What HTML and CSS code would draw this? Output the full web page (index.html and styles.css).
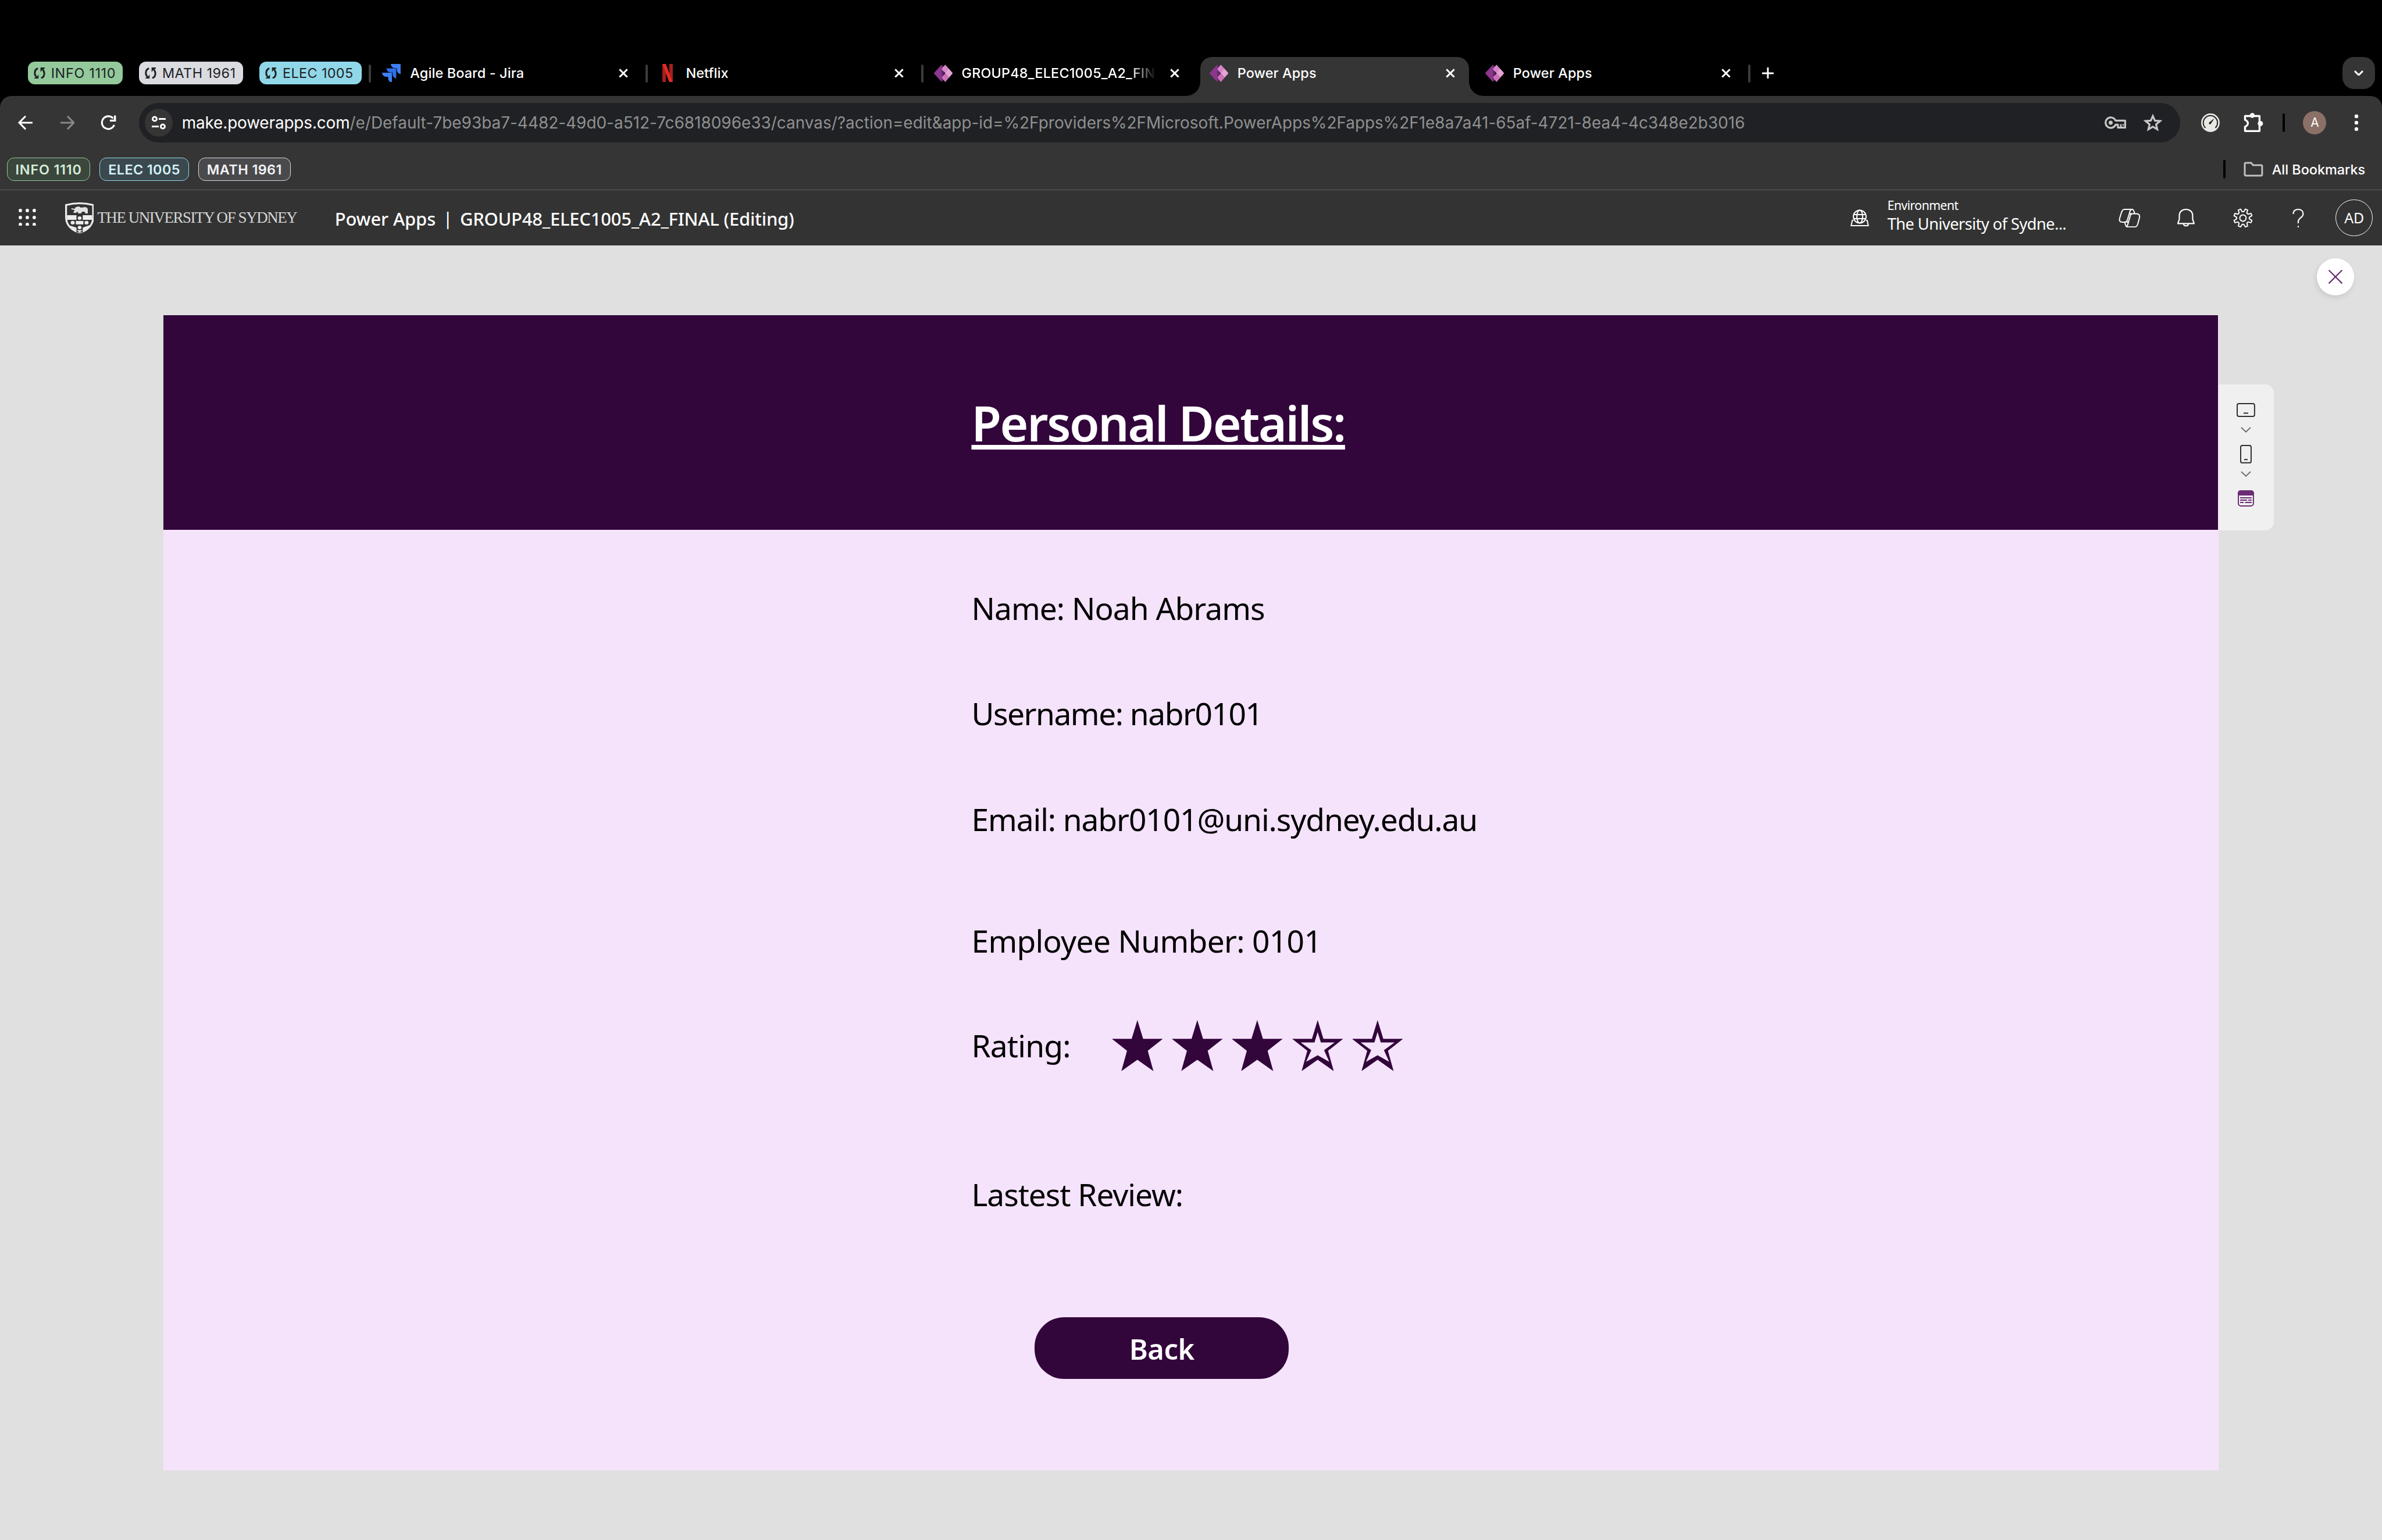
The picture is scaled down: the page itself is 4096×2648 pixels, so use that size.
FILE: index.html
```html
<!DOCTYPE html>
<html lang="en">
<head>
<meta charset="utf-8">
<title>Power Apps</title>
<link rel="stylesheet" href="styles.css">
</head>
<body>
<svg class="defs" width="0" height="0" aria-hidden="true">
  <symbol id="close" viewBox="0 0 16 16"><path d="M1.3 1.3 14.7 14.7M14.7 1.3 1.3 14.7" fill="none" stroke="currentColor" stroke-width="3"/></symbol>
  <symbol id="sync" viewBox="0 0 20 20"><path d="M7.2 1.5C3.6 2.8 1.8 6 1.8 9.8c0 3 1 5 3.2 6.6" fill="none" stroke="currentColor" stroke-width="3"/><path d="M8.3 12v8H1v-2.300L5 16.500z" fill="currentColor"/><path d="M12.8 18.500c3.600-1.300 5.400-4.500 5.400-8.300 0-3-1-5-3.200-6.600" fill="none" stroke="currentColor" stroke-width="3"/><path d="M11.700 8V0H19v2.300L15 3.500z" fill="currentColor"/></symbol>
  <symbol id="papps" viewBox="0 0 32 32"><path d="M13 1.500 16 4.500V27.500L13 30.500 .8 17.400a2 2 0 0 1 0-2.800z" fill="#8b378e"/><path d="M13 1.500 16.500 5 13 9.500 18 16 13 22 16.500 27 13 30.500z" fill="#6b2475"/><path d="M19.500 1.200 31.300 14.600a2 2 0 0 1 0 2.800L19.500 30.800 14.500 25a2 2 0 0 1 0-2.600L19.500 16 14 10a2 2 0 0 1 0-2.700z" fill="#d586c4"/><path d="M25.300 8 31.300 14.600a2 2 0 0 1 0 2.800L26 23.200 20 16z" fill="#e3a3d3"/><path d="M20 16 26 23.200 19.500 30.800 14.500 25a2 2 0 0 1 0-2.600z" fill="#cb72b6"/></symbol>
  <symbol id="star" viewBox="0 0 88 88"><path d="M44 0 53.900 32.400H88L61.900 53 71.700 88 44 68.500 16.300 88 26.100 53 0 32.400H34.100Z" fill="currentColor"/></symbol>
  <symbol id="star-empty" viewBox="0 0 88 88"><path fill-rule="evenodd" d="M44 0 53.900 32.400H88L61.900 53 71.700 88 44 68.500 16.300 88 26.100 53 0 32.400H34.100ZM44 20.700 38.500 38.600H14.700L33 52 24 72 44 60.800 64 72 55 52 73.300 38.600H49.500Z" fill="currentColor"/></symbol>
</svg>
<div class="screen">
  <header class="tabstrip">
    <div class="group green"><svg class="i20"><use href="#sync"/></svg><span>INFO 1110</span></div>
    <div class="group grey"><svg class="i20"><use href="#sync"/></svg><span>MATH 1961</span></div>
    <div class="group blue"><svg class="i20"><use href="#sync"/></svg><span>ELEC 1005</span></div>
    <div class="tab first">
      <svg class="fav" viewBox="0 0 32 32"><path d="M15 0H32V17.500C28 16.500 25.500 14 25.500 9.500V7H22C18 7 15.500 4 15 0Z" fill="#3d80f5"/><path d="M7.500 7.500H24.500V25C20.500 24 18 21 18 17V14.500H14.500C10.500 14.500 8 11.500 7.500 7.500Z" fill="#2e6fe8"/><path d="M0 15H17V32C13 31 10.500 28.500 10.500 24.500V22H7C3 22 .5 19 0 15Z" fill="#3d80f5"/></svg>
      <span class="title">Agile Board - Jira</span><svg class="x"><use href="#close"/></svg>
    </div>
    <div class="tab">
      <svg class="fav" viewBox="0 0 32 32"><path d="M7 0h6v32H7zM19 0h6v32h-6z" fill="#a61e1e"/><path d="M7 0h6l12 32h-6z" fill="#dd2c26"/></svg>
      <span class="title">Netflix</span><svg class="x"><use href="#close"/></svg>
    </div>
    <div class="tab bare">
      <svg class="fav"><use href="#papps"/></svg>
      <span class="title long">GROUP48_ELEC1005_A2_FINAL</span><svg class="x"><use href="#close"/></svg>
    </div>
    <div class="tab active">
      <svg class="fav"><use href="#papps"/></svg>
      <span class="title">Power Apps</span><svg class="x"><use href="#close"/></svg>
    </div>
    <div class="tab">
      <svg class="fav"><use href="#papps"/></svg>
      <span class="title">Power Apps</span><svg class="x"><use href="#close"/></svg>
    </div>
    <svg class="plus" viewBox="0 0 20 20"><path d="M10 0V20M0 10H20" stroke="#fff" stroke-width="3"/></svg>
    <div class="search"><svg width="16" height="10" viewBox="0 0 16 10"><path d="M1 1.200 8 8 15 1.200" fill="none" stroke="#fff" stroke-width="3"/></svg></div>
  </header>

  <div class="toolbar">
    <svg class="back" width="26" height="26" viewBox="0 0 26 26"><path d="M13 1.800 2 13 13 24.200M2 13H25" fill="none" stroke="#fff" stroke-width="3"/></svg>
    <svg class="fwd" width="26" height="26" viewBox="0 0 26 26"><path d="M13 1.800 24 13 13 24.200M24 13H1" fill="none" stroke="#8a8a8a" stroke-width="3"/></svg>
    <svg class="reload" width="28" height="28" viewBox="0 0 28 28"><path d="M23.500 18A11 11 0 1 1 21.500 6.500" fill="none" stroke="#fff" stroke-width="3.200"/><path d="M23 1.500h3.500V12H16V8.700h7z" fill="#fff"/></svg>
    <div class="omnibox">
      <div class="site"><svg width="26" height="24" viewBox="0 0 26 24" fill="none" stroke="#fff" stroke-width="3"><circle cx="6" cy="5.500" r="3.500"/><path d="M13 5.500H25M1 18.500H13"/><circle cx="20" cy="18.500" r="3.500"/></svg></div>
      <span class="url"><b>make.powerapps.com</b><span>/e/Default-7be93ba7-4482-49d0-a512-7c6818096e33/canvas/?action=edit&amp;app-id=%2Fproviders%2FMicrosoft.PowerApps%2Fapps%2F1e8a7a41-65af-4721-8ea4-4c348e2b3016</span></span>
      <svg class="key" width="38" height="22" viewBox="0 0 38 22"><path d="M19 7.500A9 9 0 1 0 19 14.500H23V19.500H35.500V7.500Z" fill="none" stroke="#c7c7c7" stroke-width="3.200" stroke-linejoin="round"/><circle cx="10.500" cy="11" r="3.500" fill="#c7c7c7"/><path d="M28 13.500V19M32 13.500V16" stroke="#c7c7c7" stroke-width="2.500"/></svg>
      <svg class="fave" width="34" height="32" viewBox="0 0 34 32"><path d="M17 4.500 20.500 12.500 29.500 13.200 22.600 19 24.700 27.500 17 23 9.300 27.500 11.400 19 4.500 13.200 13.500 12.500Z" fill="none" stroke="#c7c7c7" stroke-width="3.200"/></svg>
    </div>
    <svg class="gauge" width="32" height="32" viewBox="0 0 32 32"><circle cx="16" cy="16" r="16" fill="#e6e8e4"/><path d="M7.500 25A12.300 12.300 0 1 1 24.500 25" fill="none" stroke="#222" stroke-width="2"/><path d="M21.500 10 13.500 16.500 15.500 19Z" fill="#222" stroke="#222"/></svg>
    <svg class="puzzle" width="36" height="36" viewBox="0 0 36 36"><path d="M3.500 6.500H28.500V32.500H3.500V25C10 22 10 16 3.500 13Z" fill="none" stroke="#fff" stroke-width="3.400" stroke-linejoin="round"/><circle cx="16" cy="5.500" r="4.300" fill="#fff"/><circle cx="30" cy="19.500" r="4.500" fill="#fff"/></svg>
    <i class="bar"></i>
    <span class="avatar">A</span>
    <svg class="dots" width="8" height="30" viewBox="0 0 8 30" fill="#fff"><circle cx="4" cy="4" r="3.200"/><circle cx="4" cy="15" r="3.200"/><circle cx="4" cy="26" r="3.200"/></svg>
  </div>

  <div class="bookmarks">
    <span class="bm g">INFO 1110</span>
    <span class="bm b">ELEC 1005</span>
    <span class="bm w">MATH 1961</span>
    <i class="bar"></i>
    <svg class="folder" width="34" height="26" viewBox="0 0 34 26"><path d="M2 4a2 2 0 0 1 2-2H13l3.500 4H30a2 2 0 0 1 2 2V22a2 2 0 0 1-2 2H4a2 2 0 0 1-2-2Z" fill="none" stroke="#c0c0c0" stroke-width="3"/></svg>
    <span>All Bookmarks</span>
  </div>

  <div class="suite">
    <svg class="waffle" width="30" height="30" viewBox="0 0 30 30" fill="#fff"><circle cx="3" cy="3" r="2.900"/><circle cx="15" cy="3" r="2.900"/><circle cx="27" cy="3" r="2.900"/><circle cx="3" cy="15" r="2.900"/><circle cx="15" cy="15" r="2.900"/><circle cx="27" cy="15" r="2.900"/><circle cx="3" cy="27" r="2.900"/><circle cx="15" cy="27" r="2.900"/><circle cx="27" cy="27" r="2.900"/></svg>
    <svg class="shield" width="50" height="54" viewBox="0 0 46 54" preserveAspectRatio="none"><path d="M1.500 4.500Q23-1.500 44.500 4.500V26C44.500 40 34 49 23 52.500 12 49 1.500 40 1.500 26Z" fill="#333" stroke="#ececec" stroke-width="3"/><path d="M10 10l5 1 2-3 5-1 3 2 8-1 3 3v8h-4l-1-3-4 0-2 3h-4l-1-3-3 2h-4l2-5-5-1z" fill="#e2e2e2"/><path d="M3 22H43V30H3ZM7 40 19 44 23 51 27 44 40 39C36 45 29 50 23 52 16 49 10 45 7 40Z" fill="#ececec"/><path d="M18 22h10v30h-10z" fill="#333"/><circle cx="23" cy="27" r="3" fill="#ececec"/><circle cx="12" cy="35" r="3.200" fill="#ececec"/><circle cx="34" cy="35" r="3.200" fill="#ececec"/><path d="M17 32h12v6H17z" fill="#ececec"/><circle cx="23" cy="43.500" r="3" fill="#ececec"/><path d="M18 48h10l-5 4z" fill="#ececec"/></svg>
    <span class="uni">THE UNIVERSITY OF SYDNEY</span>
    <span class="app">Power Apps</span><span class="pipe">|</span><span class="app file">GROUP48_ELEC1005_A2_FINAL (Editing)</span>
    <svg class="envicon" width="32" height="30" viewBox="0 0 32 30" fill="none" stroke="#fff" stroke-width="2"><circle cx="16" cy="12.500" r="11"/><ellipse cx="16" cy="12.500" rx="5" ry="11"/><path d="M5.500 9H26.500M5.500 16H26.500M5 19H3.200L1.200 28H30.800L28.800 19H27"/></svg>
    <div class="env"><span class="small">Environment</span><span class="big">The University of Sydne...</span></div>
    <svg class="copilot" width="38" height="34" viewBox="0 0 38 34" fill="none" stroke="#fff" stroke-width="2" stroke-linejoin="round"><path d="M10 2H23.500C26.500 2 26.500 6 28 9.500H31C35.500 9.500 37 12.500 36 16.500L33.500 26C32.300 30.500 31 32.500 27 32.500H16C12 32.500 12 28 10.500 24H6C2 24 .8 21.500 2 17L4.800 8C6 4 7 2 10 2Z"/><path d="M23 2C21 2.500 20 4 19.300 7L15 21C14 24 12.500 24 10.500 24M28 9.500H24C21.500 9.500 20.800 11 20 14L16.500 26C15.500 30 14.500 32 12.500 31M19 9.500H24M14 24H18"/></svg>
    <svg class="bell" width="32" height="34" viewBox="0 0 32 34" fill="none" stroke="#fff" stroke-width="2.200" stroke-linejoin="round"><path d="M4.500 19V13C4.500 6 9.500 2 16 2S27.500 6 27.500 13V19L30 26.500H2Z"/><path d="M12 27C12 31.500 20 31.500 20 27"/></svg>
    <svg class="gear" width="34" height="34" viewBox="0 0 34 34" fill="none" stroke="#fff" stroke-width="2" stroke-linejoin="round"><path d="M12.900 1.600 15.600 6.100H18.400L21.100 1.600 25 3.200 23.700 8.300 25.700 10.300 30.800 9 32.400 12.900 27.900 15.600V18.400L32.400 21.100 30.800 25 25.700 23.700 23.700 25.700 25 30.800 21.100 32.400 18.400 27.900H15.600L12.900 32.400 9 30.800 10.300 25.700 8.300 23.700 3.200 25 1.600 21.100 6.100 18.400V15.600L1.600 12.900 3.200 9 8.300 10.300 10.300 8.300 9 3.200Z"/><circle cx="17" cy="17" r="5.500"/></svg>
    <svg class="help" width="20" height="34" viewBox="0 0 20 34" fill="none" stroke="#fff" stroke-width="2.200"><path d="M1.500 10C1.500 4.500 5 2 10 2S18.500 5 18.500 10C18.500 16 10 17 10 23V26"/><path d="M10 30.500V33"/></svg>
    <span class="me">AD</span>
  </div>

  <main class="stage">
    <section class="canvas">
      <div class="banner"><h1>Personal Details:</h1></div>
      <div class="form">
        <p class="name">Name: Noah Abrams</p>
        <p class="user">Username: nabr0101</p>
        <p class="mail">Email: nabr0101@uni.sydney.edu.au</p>
        <p class="emp">Employee Number: 0101</p>
        <p class="rate"><span class="lbl">Rating:</span><span class="stars"><svg><use href="#star"/></svg><svg><use href="#star"/></svg><svg><use href="#star"/></svg><svg><use href="#star-empty"/></svg><svg><use href="#star-empty"/></svg></span></p>
        <p class="rev">Lastest Review:</p>
        <button class="backbtn">Back</button>
      </div>
    </section>
    <aside class="rail">
      <svg class="tablet" width="34" height="26" viewBox="0 0 34 26" fill="none" stroke="#2f2f2f" stroke-width="2"><rect x="2" y="2" width="30" height="22" rx="3"/><path d="M13 18.500H21"/></svg>
      <svg class="chev" width="18" height="10" viewBox="0 0 18 10"><path d="M1 1 9 8.700 17 1" fill="none" stroke="#6a6a6a" stroke-width="1.800"/></svg>
      <svg class="phone" width="22" height="34" viewBox="0 0 22 34" fill="none" stroke="#2f2f2f" stroke-width="2"><rect x="2" y="2" width="18" height="30" rx="3"/><path d="M8 26.300H14"/></svg>
      <svg class="chev two" width="18" height="10" viewBox="0 0 18 10"><path d="M1 1 9 8.700 17 1" fill="none" stroke="#6a6a6a" stroke-width="1.800"/></svg>
      <svg class="resp" width="30" height="30" viewBox="0 0 30 30" fill="none" stroke="#6b2c73" stroke-width="2"><rect x="2" y="2" width="26" height="26" rx="4.500"/><path d="M2 9V6A4 4 0 0 1 6 2H24A4 4 0 0 1 28 6V9Z" fill="#6b2c73"/><path d="M5 14H25M5 18H17M19 18H25M5 22H11M13.500 22H25"/></svg>
    </aside>
    <button class="exit"><svg width="26" height="26" viewBox="0 0 26 26"><path d="M1.500 1.500 24.500 24.500M24.500 1.500 1.500 24.500" stroke="#6b2c73" stroke-width="2.200"/></svg></button>
  </main>
</div>
</body>
</html>
```
FILE: styles.css
```css
* { box-sizing: border-box; }
html { background: #e0e0e0; }
body { margin: 0; overflow: hidden; font-family: Inter, "Liberation Sans", sans-serif; }
svg { display: block; flex: none; }
.defs { position: absolute; }
.screen { width: 4112px; height: 2659px; zoom: 0.99611; display: flex; flex-direction: column; background: #000; }

/* tab strip */
.tabstrip { height: 166px; flex: none; padding: 86px 12px 0 48px; display: flex; align-items: center; background: #000; color: #fff; font-size: 23.5px; white-space: nowrap; }
.group { height: 40px; border-radius: 12px; padding-left: 10px; display: flex; align-items: center; gap: 10px; color: #202124; margin-right: 28px; }
.group.green { width: 164px; background: #93c99b; letter-spacing: 0.68px; }
.group.grey { width: 180px; background: #dadbe0; letter-spacing: 0.46px; }
.group.blue { width: 176px; background: #90d8e9; margin-right: 16px; letter-spacing: 0.36px; }
.i20 { width: 20px; height: 20px; }
.tab { position: relative; width: 476px; height: 80px; flex: none; padding: 0 32px 0 20px; display: flex; align-items: center; }
.tab::after { content: ""; position: absolute; right: -2px; top: 25px; width: 4px; height: 32px; border-radius: 2px; background: #3c3c3c; }
.tab.bare::after { display: none; }
.tab.first::before { content: ""; position: absolute; left: -4px; top: 25px; width: 4px; height: 32px; border-radius: 2px; background: #3c3c3c; }
.fav { width: 32px; height: 32px; margin-right: 16px; }
.title { font-weight: 500; letter-spacing: 0.13px; }
.title.long { width: 338px; overflow: hidden; letter-spacing: 0.17px; -webkit-mask-image: linear-gradient(90deg, #000 290px, transparent 336px); mask-image: linear-gradient(90deg, #000 290px, transparent 336px); }
.x { width: 16px; height: 16px; margin-left: auto; color: #fff; }
.tab.active { isolation: isolate; }
.tab.active::before { content: ""; position: absolute; z-index: -1; left: 4px; top: 12px; width: 464px; height: 68px; background: #353535; border-radius: 20px 20px 0 0; }
.tab.active::after { z-index: -1; left: -20px; right: auto; top: 56px; width: 512px; height: 24px; border-radius: 0; background: radial-gradient(circle at 0 0, transparent 23.5px, #353535 24px) left / 24px 24px no-repeat, radial-gradient(circle at 100% 0, transparent 23.5px, #353535 24px) right / 24px 24px no-repeat; }
.plus { width: 20px; height: 20px; margin-left: 22px; }
.search { width: 56px; height: 56px; border-radius: 20px; background: #353535; margin-left: auto; display: grid; place-items: center; }

/* address row */
.toolbar { height: 92px; flex: none; background: #353535; border-radius: 20px 20px 0 0; display: flex; align-items: center; padding-left: 31px; }
.fwd { margin-left: 46px; }
.reload { margin-left: 45px; }
.omnibox { width: 3524px; height: 68px; border-radius: 34px; margin-left: 38px; background: #202124; display: flex; align-items: center; padding-left: 10px; white-space: nowrap; }
.site { width: 48px; height: 48px; border-radius: 50%; background: #353535; display: grid; place-items: center; }
.url { margin-left: 16px; font-size: 28px; color: #8f9092; letter-spacing: 0.025px; }
.url b { color: #fff; font-weight: 400; letter-spacing: -0.12px; }
.key { margin-left: auto; }
.fave { margin: 0 31px 0 28px; }
.gauge { margin-left: 36px; }
.puzzle { margin-left: 40px; }
.bar { width: 4px; height: 32px; border-radius: 2px; background: #000; }
.toolbar .bar { margin-left: 32px; }
.avatar { width: 40px; height: 40px; margin-left: 32px; border-radius: 50%; background: #8a7066; color: #fff; font: 21px/41px Inter, sans-serif; text-align: center; }
.dots { margin-left: 48px; }

/* bookmarks */
.bookmarks { height: 70px; flex: none; padding: 0 29px 0 12px; background: #353535; border-bottom: 2px solid #5f5f5f; display: flex; align-items: center; font-size: 23.5px; font-weight: 500; color: #fff; white-space: nowrap; }
.bm { height: 40px; border: 2px solid; border-radius: 12px; margin-right: 16px; display: grid; place-items: center; font-weight: 600; }
.bm.g { width: 144px; border-color: #93c99b; background: #3b463d; color: #d3ecd6; letter-spacing: 0.8px; }
.bm.b { width: 154px; border-color: #90d8e9; background: #3b484d; color: #d2f1f8; letter-spacing: 0.38px; }
.bm.w { width: 160px; border-color: #dadbe0; background: #4a4a4d; color: #f3f3f5; letter-spacing: 0.45px; }
.bookmarks .bar { margin-left: auto; }
.folder { margin: 0 15px 0 31px; }

/* suite header */
.suite { height: 96px; flex: none; background: #333; color: #fff; display: flex; align-items: center; padding: 0 16px 0 32px; white-space: nowrap; font-family: "Noto Sans", "Open Sans", sans-serif; }
.waffle { margin-top: -2px; }
.shield { margin-left: 50px; }
.uni { margin-left: 6px; width: 344px; font-family: "Liberation Serif", serif; font-size: 27px; letter-spacing: -1.38px; color: #d6d6d6; }
.app { font-size: 31px; font-weight: 500; margin: 2px 0 0 66px; letter-spacing: -0.09px; }
.pipe { font-size: 31px; width: 42px; text-align: center; }
.app.file { margin-left: 0; letter-spacing: -0.17px; }
.envicon { margin-left: auto; }
.env { width: 321px; margin: -6px 0 0 32px; display: flex; flex-direction: column; }
.small { font-size: 21.5px; line-height: 28px; letter-spacing: -0.65px; }
.big { font-size: 27.5px; line-height: 37px; letter-spacing: -0.62px; }
.copilot { margin-left: 78px; }
.bell { margin-left: 63px; }
.gear { margin-left: 65px; }
.help { margin-left: 68px; }
.me { width: 64px; height: 64px; border: 2px solid #fff; border-radius: 50%; margin-left: 55px; font-size: 25px; line-height: 62px; text-align: center; }

/* app preview */
.stage { position: relative; flex: 1; background: #e0e0e0; padding: 120px 0 0 282px; display: flex; align-items: flex-start; }
.canvas { width: 3548px; height: 1994px; background: #f5e3fc; font-family: "Noto Sans", "Open Sans", sans-serif; color: #000; white-space: nowrap; }
.banner { height: 371px; width: 3547px; background: #32053b; padding: 2px 0 0 1395px; display: flex; align-items: center; }
h1 { margin: 0; color: #fff; font-size: 84px; font-weight: 600; line-height: 114px; letter-spacing: -2.34px; text-decoration: underline; text-decoration-thickness: 8px; text-underline-offset: 6px; text-decoration-skip-ink: none; }
.form { padding: 98px 0 0 1395px; }
p { margin: 0; height: 74px; font-size: 53.5px; line-height: 74px; letter-spacing: -0.98px; }
.user, .mail { margin-top: 108px; }
.user { letter-spacing: -1.5px; }
.mail { letter-spacing: -1.1px; }
.emp { margin-top: 136px; letter-spacing: -0.7px; }
.rate { margin-top: 107px; display: flex; align-items: center; letter-spacing: -0.81px; }
.lbl { width: 242px; }
.stars { display: flex; gap: 15.8px; color: #32053b; }
.stars svg { width: 88px; height: 88px; }
.rev { margin-top: 183px; letter-spacing: -1.05px; }
.backbtn { display: grid; place-items: center; margin: 175px 0 0 109px; padding: 4px 0 0; width: 439px; height: 106px; border: 0; border-radius: 51px; background: #32053b; color: #fff; font: 600 49px/66px "Noto Sans", sans-serif; letter-spacing: -0.5px; }

/* device rail */
.rail { width: 95px; height: 252px; margin-top: 120px; padding-top: 31px; background: #f0f0f0; border-radius: 0 15px 15px 0; display: flex; flex-direction: column; align-items: center; }
.chev { margin-top: 16px; }
.phone { margin-top: 20px; }
.chev.two { margin-top: 12px; }
.resp { margin-top: 22px; }
.exit { position: absolute; left: 4000px; top: 22px; width: 64px; height: 64px; border: 0; border-radius: 50%; background: #fff; padding: 0; display: grid; place-items: center; box-shadow: -2px 4px 10px rgba(0,0,0,.1); }
```
